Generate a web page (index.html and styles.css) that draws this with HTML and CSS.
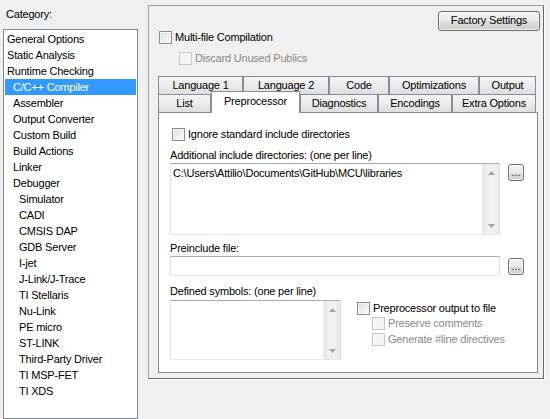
FILE: index.html
```html
<!DOCTYPE html>
<html>
<head>
<meta charset="utf-8">
<title>Options</title>
<link rel="stylesheet" href="styles.css">
</head>
<body>
<div class="app">
  <div class="left">
    <div class="cat-label">Category:</div>
    <div class="listbox">
      <div class="item l0">General Options</div>
      <div class="item l0">Static Analysis</div>
      <div class="item l0">Runtime Checking</div>
      <div class="item l1 sel">C/C++ Compiler</div>
      <div class="item l1">Assembler</div>
      <div class="item l1">Output Converter</div>
      <div class="item l1">Custom Build</div>
      <div class="item l1">Build Actions</div>
      <div class="item l1">Linker</div>
      <div class="item l1">Debugger</div>
      <div class="item l2">Simulator</div>
      <div class="item l2">CADI</div>
      <div class="item l2">CMSIS DAP</div>
      <div class="item l2">GDB Server</div>
      <div class="item l2">I-jet</div>
      <div class="item l2">J-Link/J-Trace</div>
      <div class="item l2">TI Stellaris</div>
      <div class="item l2">Nu-Link</div>
      <div class="item l2">PE micro</div>
      <div class="item l2">ST-LINK</div>
      <div class="item l2">Third-Party Driver</div>
      <div class="item l2">TI MSP-FET</div>
      <div class="item l2">TI XDS</div>
    </div>
  </div>

  <div class="group">
    <div class="header"><div class="btn factory">Factory Settings</div></div>
    <div class="chk top-chk"><span class="box"></span><span>Multi-file Compilation</span></div>
    <div class="chk disabled sub-chk"><span class="box"></span><span>Discard Unused Publics</span></div>

    <div class="tabs">
      <div class="tabrow">
        <div class="tab w85">Language 1</div>
        <div class="tab w86">Language 2</div>
        <div class="tab w60">Code</div>
        <div class="tab w90">Optimizations</div>
        <div class="tab w57">Output</div>
      </div>
      <div class="tabrow">
        <div class="tab w53">List</div>
        <div class="tab w89 active">Preprocessor</div>
        <div class="tab w78">Diagnostics</div>
        <div class="tab w74">Encodings</div>
        <div class="tab w84">Extra Options</div>
      </div>
      <div class="page">
        <div class="chk ignore-chk"><span class="box"></span><span>Ignore standard include directories</span></div>

        <div class="field-label inc-label">Additional include directories: (one per line)</div>
        <div class="field-row">
          <div class="textbox multi inc-box">
            <div class="tb-text">C:\Users\Attilio\Documents\GitHub\MCU\libraries</div>
            <div class="vscroll">
              <svg width="7" height="4" viewBox="0 0 7 4"><path d="M0 4 L3.5 0 L7 4 Z" fill="#a3a3a3"/></svg>
              <svg width="7" height="4" viewBox="0 0 7 4"><path d="M0 0 L3.5 4 L7 0 Z" fill="#a3a3a3"/></svg>
            </div>
          </div>
          <div class="btn dots first-dots">...</div>
        </div>

        <div class="field-label pre-label">Preinclude file:</div>
        <div class="field-row">
          <div class="textbox single"></div>
          <div class="btn dots second-dots">...</div>
        </div>

        <div class="bottom">
          <div class="def-col">
            <div class="field-label def-label">Defined symbols: (one per line)</div>
            <div class="textbox multi def-box">
              <div class="tb-text"></div>
              <div class="vscroll">
                <svg width="7" height="4" viewBox="0 0 7 4"><path d="M0 4 L3.5 0 L7 4 Z" fill="#a3a3a3"/></svg>
                <svg width="7" height="4" viewBox="0 0 7 4"><path d="M0 0 L3.5 4 L7 0 Z" fill="#a3a3a3"/></svg>
              </div>
            </div>
          </div>
          <div class="pp-col">
            <div class="chk"><span class="box"></span><span>Preprocessor output to file</span></div>
            <div class="chk disabled pp-sub first-sub"><span class="box"></span><span>Preserve comments</span></div>
            <div class="chk disabled pp-sub second-sub"><span class="box"></span><span>Generate #line directives</span></div>
          </div>
        </div>
      </div>
    </div>
  </div>
</div>
</body>
</html>
```

FILE: styles.css
```css
* { box-sizing: border-box; }

html, body {
  margin: 0;
  padding: 0;
  background: #f0f0f0;
}

body {
  font-family: "Liberation Sans", Arial, sans-serif;
  font-size: 11px;
  line-height: 13px;
  letter-spacing: -0.2px;
  color: #000;
  width: 550px;
  height: 419px;
  overflow: hidden;
}

.app {
  display: flex;
  align-items: flex-start;
}

/* ---------- left category list ---------- */
.left {
  width: 148px;
  flex: none;
  padding: 8px 0 0 3px;
}

.cat-label {
  height: 13px;
  padding-left: 3px;
  margin-bottom: 8px;
}

.listbox {
  width: 135px;
  height: 390px;
  border: 1px solid #828790;
  background: #fff;
  padding-top: 1px;
}

.item {
  height: 16px;
  line-height: 16px;
  margin: 0 1px;
  white-space: nowrap;
}
.item.l0 { padding-left: 2px; }
.item.l1 { padding-left: 8px; }
.item.l2 { padding-left: 14px; }
.item.sel {
  background: #3399ff;
  color: #fff;
}

/* ---------- right group ---------- */
.group {
  margin-top: 5px;
  width: 396px;
  height: 374px;
  border: 1px solid;
  border-color: #a0a0a0 #6a6a6a #6a6a6a #a0a0a0;
  box-shadow: 1px 1px 0 #fff;
  display: flex;
  flex-direction: column;
  align-items: flex-start;
}

.header {
  align-self: stretch;
  display: flex;
  justify-content: flex-end;
  padding: 5px 3px 0 0;
}

.btn {
  border: 1px solid #707070;
  border-radius: 3px;
  background: linear-gradient(#f2f2f2 0%, #ebebeb 50%, #dddddd 51%, #cfcfcf 100%);
  box-shadow: inset 0 0 0 1px rgba(255,255,255,0.6);
  text-align: center;
  white-space: nowrap;
}

.factory {
  width: 102px;
  height: 20px;
  line-height: 17px;
}

/* checkboxes */
.chk {
  display: flex;
  align-items: center;
  height: 13px;
  line-height: 13px;
  white-space: nowrap;
}
.chk .box {
  width: 13px;
  height: 13px;
  flex: none;
  margin-right: 3px;
  border: 1px solid #8e8f8f;
  background: linear-gradient(135deg, #dcdcdc 0%, #f0f0f0 60%, #fbfbfb 100%);
  box-shadow: inset 0 0 0 1px #f4f4f4;
}
.chk.disabled { color: #8b8b8b; }
.chk.disabled .box {
  border-color: #c8c8c8;
  background: #f4f4f4;
  box-shadow: none;
}

.top-chk { margin-left: 10px; }
.sub-chk { margin-left: 30px; margin-top: 8px; }

/* ---------- tabs ---------- */
.tabs {
  margin-top: 11px;
  margin-left: 9px;
}

.tabrow {
  display: flex;
  height: 18px;
}

.tab {
  height: 18px;
  border: 1px solid #898c95;
  border-bottom: none;
  background: linear-gradient(#f4f4f4 0%, #ececec 50%, #dedede 100%);
  text-align: center;
  line-height: 17px;
  white-space: nowrap;
}

.tab.active {
  height: 22px;
  margin-top: -3px;
  background: #fff;
  position: relative;
  z-index: 1;
  line-height: 18px;
}

.w53 { width: 53px; }
.w57 { width: 57px; }
.w60 { width: 60px; }
.w74 { width: 74px; }
.w78 { width: 78px; }
.w84 { width: 84px; }
.w85 { width: 85px; }
.w86 { width: 86px; }
.w89 { width: 89px; }
.w90 { width: 90px; }

.page {
  width: 380px;
  height: 261px;
  border: 1px solid #898c95;
  background: #fff;
  padding-left: 11px;
}

.ignore-chk {
  margin-top: 15px;
  margin-left: 2px;
}

.field-label {
  height: 13px;
  white-space: nowrap;
}
.inc-label { margin-top: 8px; margin-bottom: 1px; }
.pre-label { margin-top: 7px; margin-bottom: 1px; }
.def-label { margin-bottom: 2px; }

.field-row {
  display: flex;
  align-items: flex-start;
}

.textbox {
  border: 1px solid;
  border-color: #abadb3 #dbdfe6 #e3e9ef #e2e3ea;
  background: #fff;
}
.textbox.multi {
  display: flex;
}
.inc-box { width: 330px; height: 72px; }
.textbox.single { width: 330px; height: 20px; }
.def-box { width: 171px; height: 60px; }

.tb-text {
  flex: 1;
  padding: 3px 0 0 2px;
  white-space: nowrap;
  overflow: hidden;
}

.vscroll {
  width: 17px;
  flex: none;
  background: linear-gradient(90deg, #e6e6e6, #f0f0f0 30%, #f0f0f0 70%, #e8e8e8);
  border-left: 1px solid #ededed;
  display: flex;
  flex-direction: column;
  justify-content: space-between;
  align-items: center;
  padding: 7px 0 6px;
}
.vscroll svg { display: block; }

.dots {
  width: 16px;
  height: 17px;
  line-height: 15px;
  margin-left: 8px;
  font-size: 11px;
  letter-spacing: 0;
  color: #333;
}
.first-dots { margin-top: 1px; }
.second-dots { margin-top: 2px; }

.bottom {
  display: flex;
  align-items: flex-start;
  margin-top: 9px;
}

.pp-col {
  margin-left: 16px;
  padding-top: 17px;
}
.pp-sub { margin-left: 15px; }
.first-sub { margin-top: 2px; }
.second-sub { margin-top: 3px; }
```
